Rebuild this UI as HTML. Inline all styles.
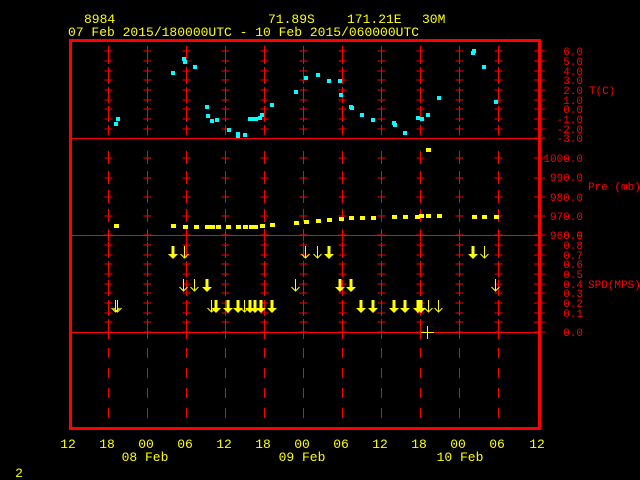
<!DOCTYPE html>
<html><head><meta charset="utf-8"><style>
html,body{margin:0;padding:0;background:#000;width:640px;height:480px;overflow:hidden}
svg{display:block}
text{font-family:"Liberation Mono",monospace}
</style></head><body>
<svg width="640" height="480" viewBox="0 0 640 480" xmlns="http://www.w3.org/2000/svg">
<defs>
<g id="col" stroke="#f00" stroke-width="1" fill="none">
<path d="M0 46V64M0 67V84M0 87V103M0 106V122M0 125V135"/>
<path d="M-4 51H4M-4 61H4M-4 71H4M-4 80H4M-4 90H4M-4 100H4M-4 109H4M-4 119H4M-4 129H4"/>
<path d="M0 151V164M0 171V184M0 190V203M0 209V222M0 229V241"/>
<path d="M-4 158H4M-4 178H4M-4 197H4M-4 216H4M-4 235H4"/>
<path d="M0 242V258M0 261V277M0 280V296M0 300V316M0 319V339"/>
<path d="M-4 245H4M-4 255H4M-4 264H4M-4 274H4M-4 284H4M-4 293H4M-4 303H4M-4 313H4M-4 322H4M-4 332H4"/>
<path d="M0 348V358M0 368V378M0 388V398M0 408V418"/>
</g>
<g id="ta" fill="#ff0"><rect x="-1.5" y="0" width="3" height="9"/><path d="M-5 8H5L0 13Z"/></g>
<g id="na" stroke="#ff0" stroke-width="1" fill="none"><path d="M0 0V12M-4 8L0 12L4 8"/></g>
</defs>
<g fill="#ff0" font-size="13">
<text x="84" y="23">8984</text>
<text x="268" y="23">71.89S</text>
<text x="347" y="23">171.21E</text>
<text x="422" y="23">30M</text>
<text x="68" y="36">07 Feb 2015/180000UTC - 10 Feb 2015/060000UTC</text>
</g>
<rect x="70.5" y="40.5" width="469" height="388" fill="none" stroke="#f00" stroke-width="3"/>
<path d="M71 138.5H540M71 235.5H540M71 332.5H540" stroke="#f00" stroke-width="1"/>
<use href="#col" x="108.5"/><use href="#col" x="147.5"/><use href="#col" x="186.5"/><use href="#col" x="225.5"/><use href="#col" x="264.5"/><use href="#col" x="303.5"/><use href="#col" x="342.5"/><use href="#col" x="381.5"/><use href="#col" x="420.5"/><use href="#col" x="459.5"/><use href="#col" x="498.5"/>
<g stroke="#f00"><path d="M534 51H545M534 61H545M534 71H545M534 80H545M534 90H545M534 100H545M534 109H545M534 119H545M534 129H545M534 138H545M534 158H545M534 178H545M534 197H545M534 216H545M534 235H545M534 245H545M534 255H545M534 264H545M534 274H545M534 284H545M534 293H545M534 303H545M534 313H545M534 322H545M534 332H545"/></g>
<g fill="#f00" font-size="11" text-anchor="end">
<text x="583" y="55">6.0</text><text x="583" y="65">5.0</text><text x="583" y="75">4.0</text><text x="583" y="84">3.0</text><text x="583" y="94">2.0</text><text x="583" y="104">1.0</text><text x="583" y="113">0.0</text><text x="583" y="123">-1.0</text><text x="583" y="133">-2.0</text><text x="583" y="142">-3.0</text>
<text x="583" y="162">1000.0</text><text x="583" y="181">990.0</text><text x="583" y="201">980.0</text><text x="583" y="220">970.0</text><text x="583" y="239">960.0</text>
<text x="583" y="239">0.9</text><text x="583" y="249">0.8</text><text x="583" y="259">0.7</text><text x="583" y="268">0.6</text><text x="583" y="278">0.5</text><text x="583" y="288">0.4</text><text x="583" y="297">0.3</text><text x="583" y="307">0.2</text><text x="583" y="317">0.1</text><text x="583" y="336">0.0</text>
</g>
<g fill="#f00" font-size="11">
<text x="589" y="94">T(C)</text><text x="588" y="190">Pre (mb)</text><text x="588" y="288">SPD(MPS)</text>
</g>
<g fill="#ff0" font-size="13" text-anchor="middle">
<text x="68" y="448">12</text><text x="107" y="448">18</text><text x="146" y="448">00</text><text x="185" y="448">06</text><text x="224" y="448">12</text><text x="263" y="448">18</text><text x="302" y="448">00</text><text x="341" y="448">06</text><text x="380" y="448">12</text><text x="419" y="448">18</text><text x="458" y="448">00</text><text x="497" y="448">06</text><text x="537" y="448">12</text>
<text x="145" y="461">08 Feb</text><text x="302" y="461">09 Feb</text><text x="460" y="461">10 Feb</text>
<text x="19" y="477">2</text>
</g>
<g fill="#0ff">
<rect x="114" y="122" width="4" height="4"/><rect x="116" y="117" width="4" height="4"/><rect x="171" y="71" width="4" height="4"/><rect x="182" y="57" width="4" height="4"/><rect x="183" y="60" width="4" height="4"/><rect x="193" y="65" width="4" height="4"/><rect x="205" y="105" width="4" height="4"/><rect x="206" y="114" width="4" height="4"/><rect x="210" y="119" width="4" height="4"/><rect x="215" y="118" width="4" height="4"/><rect x="227" y="128" width="4" height="4"/><rect x="236" y="134" width="4" height="4"/><rect x="236" y="132" width="4" height="4"/><rect x="243" y="133" width="4" height="4"/><rect x="248" y="117" width="4" height="4"/><rect x="251" y="117" width="4" height="4"/><rect x="254" y="117" width="4" height="4"/><rect x="258" y="116" width="4" height="4"/><rect x="260" y="113" width="4" height="4"/><rect x="270" y="103" width="4" height="4"/><rect x="294" y="90" width="4" height="4"/><rect x="304" y="76" width="4" height="4"/><rect x="316" y="73" width="4" height="4"/><rect x="327" y="79" width="4" height="4"/><rect x="338" y="79" width="4" height="4"/><rect x="339" y="93" width="4" height="4"/><rect x="349" y="105" width="4" height="4"/><rect x="350" y="106" width="4" height="4"/><rect x="360" y="113" width="4" height="4"/><rect x="371" y="118" width="4" height="4"/><rect x="392" y="121" width="4" height="4"/><rect x="393" y="123" width="4" height="4"/><rect x="403" y="131" width="4" height="4"/><rect x="416" y="116" width="4" height="4"/><rect x="420" y="117" width="4" height="4"/><rect x="426" y="113" width="4" height="4"/><rect x="437" y="96" width="4" height="4"/><rect x="471" y="51" width="4" height="4"/><rect x="472" y="49" width="4" height="4"/><rect x="482" y="65" width="4" height="4"/><rect x="494" y="100" width="4" height="4"/>
</g>
<g fill="#ff0">
<rect x="114" y="224" width="5" height="4"/><rect x="171" y="224" width="5" height="4"/><rect x="183" y="225" width="5" height="4"/><rect x="194" y="225" width="5" height="4"/><rect x="205" y="225" width="5" height="4"/><rect x="210" y="225" width="5" height="4"/><rect x="216" y="225" width="5" height="4"/><rect x="226" y="225" width="5" height="4"/><rect x="236" y="225" width="5" height="4"/><rect x="243" y="225" width="5" height="4"/><rect x="249" y="225" width="5" height="4"/><rect x="253" y="225" width="5" height="4"/><rect x="260" y="224" width="5" height="4"/><rect x="270" y="223" width="5" height="4"/><rect x="294" y="221" width="5" height="4"/><rect x="304" y="220" width="5" height="4"/><rect x="316" y="219" width="5" height="4"/><rect x="327" y="218" width="5" height="4"/><rect x="339" y="217" width="5" height="4"/><rect x="349" y="216" width="5" height="4"/><rect x="360" y="216" width="5" height="4"/><rect x="371" y="216" width="5" height="4"/><rect x="392" y="215" width="5" height="4"/><rect x="403" y="215" width="5" height="4"/><rect x="415" y="215" width="5" height="4"/><rect x="419" y="214" width="5" height="4"/><rect x="426" y="214" width="5" height="4"/><rect x="437" y="214" width="5" height="4"/><rect x="472" y="215" width="5" height="4"/><rect x="482" y="215" width="5" height="4"/><rect x="494" y="215" width="5" height="4"/><rect x="426" y="148" width="5" height="4"/>
</g>
<use href="#ta" x="173" y="246"/><use href="#na" x="184.5" y="246"/><use href="#na" x="305.5" y="246"/><use href="#na" x="317.5" y="246"/><use href="#ta" x="329" y="246"/><use href="#ta" x="473" y="246"/><use href="#na" x="484.5" y="246"/>
<use href="#na" x="183.5" y="279"/><use href="#na" x="194.5" y="279"/><use href="#ta" x="207" y="279"/><use href="#na" x="295.5" y="279"/><use href="#ta" x="340" y="279"/><use href="#ta" x="351" y="279"/><use href="#na" x="495.5" y="279"/>
<use href="#na" x="115.5" y="300"/><use href="#na" x="117.5" y="300"/><use href="#na" x="211.5" y="300"/><use href="#ta" x="216" y="300"/><use href="#ta" x="228" y="300"/><use href="#ta" x="238" y="300"/><use href="#na" x="244.5" y="300"/><use href="#ta" x="250" y="300"/><use href="#ta" x="255" y="300"/><use href="#ta" x="261" y="300"/><use href="#ta" x="272" y="300"/><use href="#ta" x="361" y="300"/><use href="#ta" x="373" y="300"/><use href="#ta" x="394" y="300"/><use href="#ta" x="405" y="300"/><use href="#ta" x="418" y="300"/><use href="#ta" x="421" y="300"/><use href="#na" x="428.5" y="300"/><use href="#na" x="438.5" y="300"/>
<path d="M421 332.5H434M427.5 326V339" stroke="#ff0" stroke-width="1"/>
</svg>
</body></html>
